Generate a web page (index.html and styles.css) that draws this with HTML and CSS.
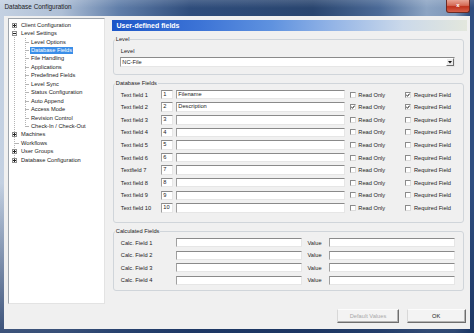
FILE: index.html
```html
<!DOCTYPE html>
<html>

<head>
    <meta charset="utf-8">
    <title>Database Configuration</title>
    <link rel="stylesheet" href="styles.css">
</head>

<body>
    <div class="window">
        <div class="titlebar">
            <span class="title">Database Configuration</span>
            <span class="close">x</span>
        </div>

        <div class="client">
            <div class="content">
                <!-- navigation tree -->
                <div class="tree">
                    <ul class="tree-list">
                        <li class="node"><span class="exp plus"></span><span class="label">Client Configuration</span></li>
                        <li class="node"><span class="exp minus"></span><span class="label">Level Settings</span></li>
                        <li>
                            <ul class="sub">
                                <li class="node"><span class="stub"></span><span class="label">Level Options</span></li>
                                <li class="node"><span class="stub"></span><span class="label selected">Database Fields</span></li>
                                <li class="node"><span class="stub"></span><span class="label">File Handling</span></li>
                                <li class="node"><span class="stub"></span><span class="label">Applications</span></li>
                                <li class="node"><span class="stub"></span><span class="label">Predefined Fields</span></li>
                                <li class="node"><span class="stub"></span><span class="label">Level Sync</span></li>
                                <li class="node"><span class="stub"></span><span class="label">Status Configuration</span></li>
                                <li class="node"><span class="stub"></span><span class="label">Auto Append</span></li>
                                <li class="node"><span class="stub"></span><span class="label">Access Mode</span></li>
                                <li class="node"><span class="stub"></span><span class="label">Revision Control</span></li>
                                <li class="node"><span class="stub"></span><span class="label">Check-In / Check-Out</span></li>
                            </ul>
                        </li>
                        <li class="node"><span class="exp plus"></span><span class="label">Machines</span></li>
                        <li class="node"><span class="exp leaf"></span><span class="label">Workflows</span></li>
                        <li class="node"><span class="exp plus"></span><span class="label">User Groups</span></li>
                        <li class="node"><span class="exp plus"></span><span class="label">Database Configuration</span></li>
                    </ul>
                </div>

                <!-- settings page -->
                <div class="main">
                    <div class="panel-head">User-defined fields</div>

                    <fieldset class="group level-group">
                        <legend>Level</legend>
                        <div class="level-label">Level</div>
                        <div class="select">
                            <span class="select-text">NC-File</span>
                            <span class="drop"><svg width="4" height="3" viewBox="0 0 4 3"><path d="M0 0 H4 L2 2.5 Z" fill="#111"/></svg></span>
                        </div>
                    </fieldset>

                    <fieldset class="group db-group">
                        <legend>Database Fields</legend>
                        <div class="field-grid">
                            <span>Text field 1</span>
                            <span class="box num">1</span>
                            <span class="box wide">Filename</span>
                            <span class="check"><span class="cb"></span>Read Only</span>
                            <span class="check"><span class="cb"><svg width="4" height="4" viewBox="0 0 4 4"><path d="M0.3 2 L1.5 3.2 L3.7 0.6" stroke="#111" stroke-width="1" fill="none"/></svg></span>Required Field</span>

                            <span>Text field 2</span>
                            <span class="box num">2</span>
                            <span class="box wide">Description</span>
                            <span class="check"><span class="cb"><svg width="4" height="4" viewBox="0 0 4 4"><path d="M0.3 2 L1.5 3.2 L3.7 0.6" stroke="#111" stroke-width="1" fill="none"/></svg></span>Read Only</span>
                            <span class="check"><span class="cb"><svg width="4" height="4" viewBox="0 0 4 4"><path d="M0.3 2 L1.5 3.2 L3.7 0.6" stroke="#111" stroke-width="1" fill="none"/></svg></span>Required Field</span>

                            <span>Text field 3</span>
                            <span class="box num">3</span>
                            <span class="box wide"></span>
                            <span class="check"><span class="cb"></span>Read Only</span>
                            <span class="check"><span class="cb"></span>Required Field</span>

                            <span>Text field 4</span>
                            <span class="box num">4</span>
                            <span class="box wide"></span>
                            <span class="check"><span class="cb"></span>Read Only</span>
                            <span class="check"><span class="cb"></span>Required Field</span>

                            <span>Text field 5</span>
                            <span class="box num">5</span>
                            <span class="box wide"></span>
                            <span class="check"><span class="cb"></span>Read Only</span>
                            <span class="check"><span class="cb"></span>Required Field</span>

                            <span>Text field 6</span>
                            <span class="box num">6</span>
                            <span class="box wide"></span>
                            <span class="check"><span class="cb"></span>Read Only</span>
                            <span class="check"><span class="cb"></span>Required Field</span>

                            <span>Textfield 7</span>
                            <span class="box num">7</span>
                            <span class="box wide"></span>
                            <span class="check"><span class="cb"></span>Read Only</span>
                            <span class="check"><span class="cb"></span>Required Field</span>

                            <span>Text field 8</span>
                            <span class="box num">8</span>
                            <span class="box wide"></span>
                            <span class="check"><span class="cb"></span>Read Only</span>
                            <span class="check"><span class="cb"></span>Required Field</span>

                            <span>Text field 9</span>
                            <span class="box num">9</span>
                            <span class="box wide"></span>
                            <span class="check"><span class="cb"></span>Read Only</span>
                            <span class="check"><span class="cb"></span>Required Field</span>

                            <span>Text field 10</span>
                            <span class="box num">10</span>
                            <span class="box wide"></span>
                            <span class="check"><span class="cb"></span>Read Only</span>
                            <span class="check"><span class="cb"></span>Required Field</span>
                        </div>
                    </fieldset>

                    <fieldset class="group calc-group">
                        <legend>Calculated Fields</legend>
                        <div class="calc-grid">
                            <span>Calc. Field 1</span>
                            <span class="box"></span>
                            <span class="value-label">Value</span>
                            <span class="box"></span>

                            <span>Calc. Field 2</span>
                            <span class="box"></span>
                            <span class="value-label">Value</span>
                            <span class="box"></span>

                            <span>Calc. Field 3</span>
                            <span class="box"></span>
                            <span class="value-label">Value</span>
                            <span class="box"></span>

                            <span>Calc. Field 4</span>
                            <span class="box"></span>
                            <span class="value-label">Value</span>
                            <span class="box"></span>
                        </div>
                    </fieldset>
                </div>
            </div>

            <div class="footer">
                <button class="btn defaults" disabled>Default Values</button>
                <button class="btn ok">OK</button>
            </div>
        </div>
    </div>
</body>

</html>
```

FILE: styles.css
```css
* {
    box-sizing: border-box;
}

body {
    margin: 0;
    font-family: 'Liberation Sans', Arial, sans-serif;
    font-size: 5.7px;
    color: #222;
    background: #2a4674;
}

.window {
    width: 474px;
    height: 333px;
    overflow: hidden;
    display: flex;
    flex-direction: column;
    background:
        linear-gradient(180deg, rgba(255, 255, 255, 0.15) 0, rgba(255, 255, 255, 0) 8px, rgba(0, 0, 0, 0) 55%, rgba(25, 50, 95, 0.8) 100%),
        linear-gradient(90deg, #c4d1e2 0%, #aebfd6 13%, #607ea9 25%, #2f4d7c 40%, #29456f 66%, #4b6a97 80%, #8ca4c3 90%, #7d96b8 96%, #2f4e80 99%);
}

/* title bar */
.titlebar {
    height: 16px;
    display: flex;
    justify-content: space-between;
    align-items: flex-start;
    padding-left: 4.5px;
}

.title {
    font-size: 6.4px;
    line-height: 14px;
    color: #1c1c1c;
}

.close {
    width: 24px;
    height: 13px;
    margin-right: 4px;
    border: 1px solid #6b2a24;
    border-top: none;
    border-radius: 0 0 3px 3px;
    background: linear-gradient(180deg, #e8a494 0%, #d56b56 45%, #c0321c 55%, #d4604a 100%);
    color: #fff;
    font-size: 6px;
    font-weight: bold;
    line-height: 11px;
    text-align: center;
}

/* client area */
.client {
    margin: 0 4px;
    height: 313px;
    background: #f0f0f0;
    padding: 2px 3px 6px 4px;
    display: flex;
    flex-direction: column;
}

.content {
    display: flex;
    gap: 7px;
    height: 286px;
}

/* tree */
.tree {
    width: 97px;
    background: #fff;
    border: 1px solid;
    border-color: #9ea4ab #e3e3e3 #e3e3e3 #9ea4ab;
    overflow: hidden;
}

.tree-list,
.sub {
    list-style: none;
    margin: 0;
    padding: 0;
}

.tree-list {
    padding: 2px 0 0 3px;
    background: repeating-linear-gradient(180deg, #b4b4b4 0 1px, transparent 1px 2px) no-repeat 5px 6px / 1px 135px;
}

.sub {
    padding-left: 13px;
    background: repeating-linear-gradient(180deg, #b4b4b4 0 1px, transparent 1px 2px) no-repeat 13px 0 / 1px 89px;
}

.node {
    height: 8.45px;
    display: flex;
    align-items: center;
    white-space: nowrap;
}

.exp {
    width: 5px;
    height: 5px;
    margin-right: 3px;
    border: 1px solid #8f8f8f;
    background-color: #fff;
    flex: none;
}

.exp.minus {
    background: #fff linear-gradient(#222, #222) no-repeat center / 3px 1px;
}

.exp.plus {
    background:
        linear-gradient(#222, #222) no-repeat center / 3px 1px,
        linear-gradient(#222, #222) no-repeat center / 1px 3px,
        #fff;
}

.exp.leaf {
    width: 8px;
    margin-right: 0;
    border: none;
    background: linear-gradient(#b4b4b4, #b4b4b4) no-repeat 3px 50% / 4px 1px;
}

.stub {
    width: 4px;
    height: 1px;
    margin-right: 1px;
    background: #b4b4b4;
    flex: none;
}

.label {
    padding: 0 1px;
    line-height: 7px;
}

.label.selected {
    background: #3a8ee8;
    color: #fff;
}

/* right page */
.main {
    flex: 1;
    margin-top: 2px;
    display: flex;
    flex-direction: column;
}

.panel-head {
    height: 11px;
    line-height: 11px;
    padding-left: 4.5px;
    color: #fff;
    font-size: 7px;
    font-weight: bold;
    background: linear-gradient(90deg, #1c56c8 0%, #3d74d6 25%, #5f92df 45%, #93b4e6 62%, #cbd9ea 82%, #e3e7dd 100%);
}

.group {
    margin: 4.5px 3px 0 0.5px;
    border: 1px solid #d0d5da;
    border-radius: 3px;
    padding: 0 8px 0 7.3px;
    min-width: 0;
}

.group legend {
    margin-left: -6px;
    padding: 0 1px;
    line-height: 7px;
}

.level-group {
    padding-top: 5.7px;
    padding-bottom: 7.3px;
}

.level-label {
    line-height: 7px;
    margin-bottom: 2.1px;
}

.select {
    height: 9.5px;
    margin-left: -1px;
    display: flex;
    justify-content: space-between;
    align-items: center;
    background: #fff;
    border: 1px solid;
    border-color: #8a8a8a #e6e6e6 #e6e6e6 #a0a0a0;
    padding-left: 1.5px;
}

.drop {
    width: 8px;
    height: 7.5px;
    display: flex;
    align-items: center;
    justify-content: center;
    background: #ececec;
    border: 1px solid;
    border-color: #fff #6e6e6e #6e6e6e #fff;
}

.db-group {
    padding-top: 1.7px;
    padding-bottom: 8px;
}

.calc-group {
    padding-top: 1.5px;
    padding-bottom: 3px;
}

.field-grid {
    display: grid;
    grid-template-columns: 40px 15px 174px 55.7px 1fr;
    grid-auto-rows: 12.6px;
    align-items: center;
}

.calc-grid {
    display: grid;
    grid-template-columns: 55px 126px 27px 1fr;
    grid-auto-rows: 12.6px;
    align-items: center;
}

.box {
    display: block;
    height: 9.5px;
    line-height: 7.5px;
    padding-left: 1.5px;
    background: #fff;
    border: 1px solid;
    border-color: #8a8a8a #e6e6e6 #e6e6e6 #a0a0a0;
}

.calc-grid .box {
    height: 9px;
}

.num {
    width: 12px;
}

.wide {
    width: 169px;
}

.value-label {
    padding-left: 5.7px;
}

.check {
    display: flex;
    align-items: center;
    gap: 2.5px;
    white-space: nowrap;
}

.cb {
    width: 6px;
    height: 6px;
    display: flex;
    align-items: center;
    justify-content: center;
    background: #fff;
    border: 1px solid;
    border-color: #8a8a8a #dcdcdc #dcdcdc #8a8a8a;
    flex: none;
}

/* buttons */
.footer {
    display: flex;
    justify-content: flex-end;
    gap: 7.7px;
    padding: 5px 1.3px 0 0;
}

.btn {
    height: 14px;
    padding: 0;
    font-family: 'Liberation Sans', Arial, sans-serif;
    font-size: 5.7px;
    color: #222;
    background: #f3f3f3;
    border: 1px solid;
    border-color: #fcfcfc #6e6e6e #6e6e6e #d8d8d8;
    box-shadow: inset -1px -1px 0 #b4b4b4;
}

.defaults {
    width: 62px;
    color: #a8a8a8;
}

.ok {
    width: 59px;
}
```
